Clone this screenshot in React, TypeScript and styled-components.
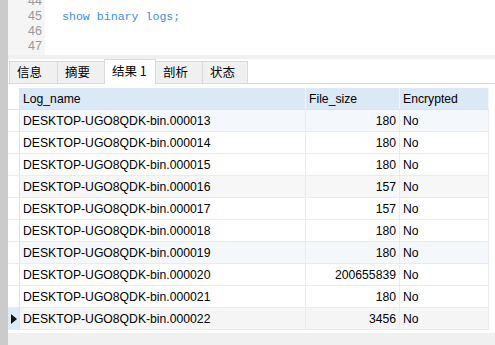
import { createGlobalStyle, styled } from "styled-components";

const GlobalStyle = createGlobalStyle`
  html, body {
    margin: 0;
    padding: 0;
    background: #ffffff;
  }
  body {
    font-family: "Liberation Sans", "Noto Sans CJK SC", sans-serif;
    color: #000;
  }
`;

const Window = styled.div`
  width: 495px;
  height: 345px;
  display: flex;
  overflow: hidden;
  background: #fff;
`;

const SideStrip = styled.div`
  width: 8px;
  flex: none;
  background: #cbcbcb;
`;

const Main = styled.div`
  flex: 1;
  display: flex;
  flex-direction: column;
  min-width: 0;
`;

/* ---- editor ---- */

const Editor = styled.div`
  height: 55px;
  flex: none;
  display: flex;
  overflow: hidden;
`;

const Gutter = styled.div`
  width: 37px;
  flex: none;
  background: #f5f5f5;
  padding-right: 3px;
  box-sizing: border-box;
  text-align: right;
  font-family: "Liberation Sans", sans-serif;
  font-size: 12.5px;
  color: #9a9a9a;
`;

const Code = styled.div`
  flex: 1;
  padding-left: 17px;
  font-family: "Liberation Mono", monospace;
  font-size: 11.6px;
  color: #3d8de2;
`;

const Lines = styled.div`
  margin-top: -6px;
`;

const Line = styled.div`
  height: 15px;
  line-height: 15px;
  white-space: pre;
`;

const Divider = styled.div`
  height: 4px;
  flex: none;
  background: #f0f0f0;
`;

/* ---- tabs ---- */

const TabBar = styled.div`
  height: 25px;
  flex: none;
  display: flex;
  align-items: flex-end;
  padding-left: 2px;
  border-bottom: 1px solid #d9d9d9;
  box-sizing: border-box;
  font-family: "Noto Sans CJK SC", sans-serif;
  font-size: 12.5px;
`;

const Tab = styled.div<{ $w: number; $active?: boolean }>`
  width: ${(p) => p.$w}px;
  height: ${(p) => (p.$active ? 25 : 22)}px;
  box-sizing: border-box;
  padding-left: 7px;
  padding-top: ${(p) => (p.$active ? 1 : 0)}px;
  line-height: 20px;
  background: ${(p) => (p.$active ? "#ffffff" : "#f0f0f0")};
  border: 1px solid #d9d9d9;
  border-bottom: none;
  margin-left: -1px;
  margin-bottom: ${(p) => (p.$active ? -1 : 0)}px;
  color: #000;
`;

/* ---- result grid ---- */

const GridArea = styled.div`
  flex: 1;
  padding-top: 4px;
`;

const Grid = styled.div`
  display: grid;
  grid-template-columns: 12px 286px 94px 89px;
  grid-auto-rows: 22px;
  font-size: 12.2px;
  color: #000;
`;

const HeadCell = styled.div<{ $blank?: boolean }>`
  background: ${(p) => (p.$blank ? "#ffffff" : "#dbe8f6")};
  border-right: 1px solid ${(p) => (p.$blank ? "#e6e6e6" : "#f2f6fb")};
  border-bottom: 1px solid #e2e2e2;
  padding: 2px 3px 0;
  line-height: 19px;
  white-space: nowrap;
  overflow: hidden;
`;

const Cell = styled.div<{ $tint?: string; $right?: boolean }>`
  background: ${(p) => p.$tint || "#ffffff"};
  border-right: 1px solid #ebebeb;
  border-bottom: 1px solid #ebebeb;
  padding: 2px 3px 0;
  line-height: 19px;
  text-align: ${(p) => (p.$right ? "right" : "left")};
  white-space: nowrap;
  overflow: hidden;
`;

const Marker = styled.div<{ $current?: boolean }>`
  background: ${(p) => (p.$current ? "#dde9f5" : "#ffffff")};
  border-right: 1px solid #e0e0e0;
  border-bottom: 1px solid #ebebeb;
  display: flex;
  align-items: center;
  justify-content: center;

  &::after {
    content: "";
    display: ${(p) => (p.$current ? "block" : "none")};
    width: 0;
    height: 0;
    margin: 1px 0 0 1px;
    border-top: 5px solid transparent;
    border-bottom: 5px solid transparent;
    border-left: 6px solid #111;
  }
`;

const StatusBar = styled.div`
  height: 12px;
  flex: none;
  background: #f0f0f0;
`;

const tabs = [
  { label: "信息", w: 49 },
  { label: "摘要", w: 48 },
  { label: "结果 1", w: 52, active: true },
  { label: "剖析", w: 48 },
  { label: "状态", w: 46 },
];

const code = ["", "show binary logs;", "", ""];

const rows = [
  { n: "000013", size: "180", tint: "#f4f8fc" },
  { n: "000014", size: "180" },
  { n: "000015", size: "180" },
  { n: "000016", size: "157", tint: "#f7f7f7" },
  { n: "000017", size: "157" },
  { n: "000018", size: "180" },
  { n: "000019", size: "180", tint: "#f4f8fc" },
  { n: "000020", size: "200655839" },
  { n: "000021", size: "180" },
  { n: "000022", size: "3456", tint: "#f5f5f5", current: true },
];

export default function App() {
  return (
    <Window>
      <GlobalStyle />
      <SideStrip />
      <Main>
        <Editor>
          <Gutter>
            <Lines>
              {code.map((_, i) => (
                <Line key={i}>{44 + i}</Line>
              ))}
            </Lines>
          </Gutter>
          <Code>
            <Lines>
              {code.map((c, i) => (
                <Line key={i}>{c || " "}</Line>
              ))}
            </Lines>
          </Code>
        </Editor>
        <Divider />
        <TabBar>
          {tabs.map((t) => (
            <Tab key={t.label} $w={t.w} $active={t.active}>
              {t.label}
            </Tab>
          ))}
        </TabBar>
        <GridArea>
          <Grid>
            <HeadCell $blank />
            <HeadCell>Log_name</HeadCell>
            <HeadCell>File_size</HeadCell>
            <HeadCell>Encrypted</HeadCell>
            {rows.map((r) => (
              <Row key={r.n} {...r} />
            ))}
          </Grid>
        </GridArea>
        <StatusBar />
      </Main>
    </Window>
  );
}

function Row({ n, size, tint, current }: { n: string; size: string; tint?: string; current?: boolean }) {
  return (
    <>
      <Marker $current={current} />
      <Cell $tint={tint}>DESKTOP-UGO8QDK-bin.{n}</Cell>
      <Cell $tint={tint} $right>
        {size}
      </Cell>
      <Cell $tint={tint}>No</Cell>
    </>
  );
}
